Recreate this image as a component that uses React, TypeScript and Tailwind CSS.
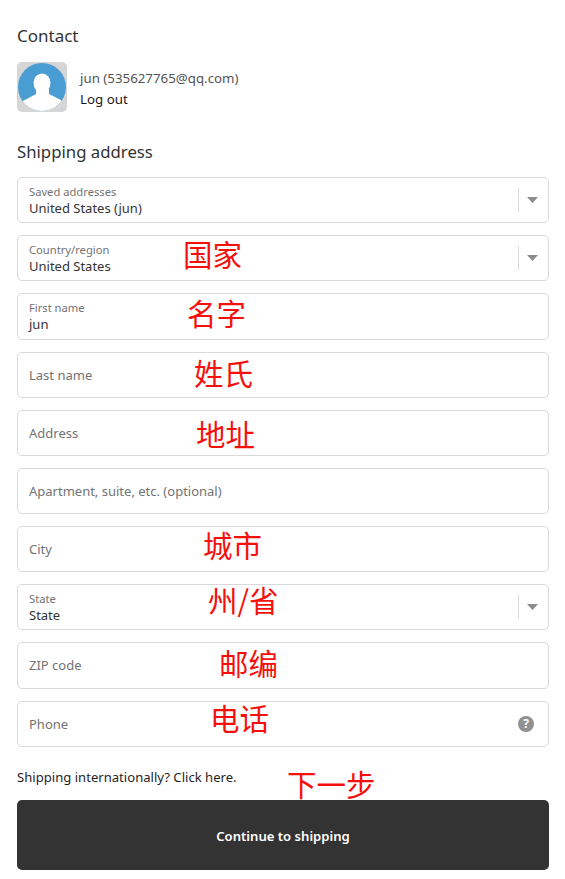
const sans = '"Noto Sans", "Open Sans", sans-serif';
const cjk = '"Noto Sans CJK SC", sans-serif';

function Caret() {
  return (
    <div className="flex items-center h-[24px] border-l border-[#d9d9d9] pl-[8px] pr-[10px]">
      <svg width="11" height="6" viewBox="0 0 11 6" aria-hidden="true">
        <path d="M0 0h11L5.5 6z" fill="#8c8c8c" />
      </svg>
    </div>
  );
}

function Note({ text, className }: { text: string; className: string }) {
  return (
    <span
      className={`absolute text-[29.5px] leading-none text-[#f5100c] whitespace-nowrap ${className}`}
      style={{ fontFamily: cjk }}
    >
      {text}
    </span>
  );
}

interface FieldProps {
  label: string;
  value?: string;
  select?: boolean;
  tall?: boolean;
  help?: boolean;
  note?: string;
  noteClass?: string;
}

function Field({ label, value, select, tall, help, note, noteClass }: FieldProps) {
  return (
    <div
      className={`relative flex items-center justify-between rounded-[5px] border border-[#d9d9d9] bg-white pl-[11px] ${tall ? 'h-[47px]' : 'h-[46px]'}`}
    >
      {value ? (
        <div className="flex flex-col">
          <span className="text-[11.2px] leading-[16px] text-[#737373]">{label}</span>
          <span className="text-[13px] leading-[17px] text-[#333]">{value}</span>
        </div>
      ) : (
        <span className={`text-[13px] text-[#737373] ${tall ? 'pt-[1px]' : 'pt-[2px]'}`}>{label}</span>
      )}
      {select && <Caret />}
      {help && (
        <div className="mr-[14px] flex h-[16px] w-[16px] items-center justify-center rounded-full bg-[#919191] text-[12px] font-bold text-white">
          ?
        </div>
      )}
      {note && <Note text={note} className={noteClass ?? ''} />}
    </div>
  );
}

export default function App() {
  return (
    <div className="relative w-[565px] h-[879px] overflow-hidden bg-white pl-[17px] pr-[16px] pt-[25px]" style={{ fontFamily: sans }}>
      <h2 className="text-[17px] leading-[22px] text-[#333]">Contact</h2>

      {/* Account */}
      <div className="mt-[15px] flex items-center gap-[13px]">
        <div className="h-[50px] w-[50px] rounded-[5px] bg-[#d6d6d6] flex items-center justify-center">
          <svg width="48" height="48" viewBox="0 0 48 48" aria-hidden="true">
            <defs>
              <clipPath id="avatar">
                <circle cx="24" cy="24" r="24" />
              </clipPath>
            </defs>
            <circle cx="24" cy="24" r="24" fill="#4a9dd3" />
            <g clipPath="url(#avatar)" fill="#fff">
              <ellipse cx="24" cy="20" rx="8.5" ry="9.5" />
              <path d="M18 26v5L5 38 2 48h44l-3-11-12-6v-5z" />
            </g>
          </svg>
        </div>
        <div className="flex flex-col gap-[3px] pt-[2px] text-[13.3px] leading-[18px]">
          <span className="text-[#545454]">jun (535627765@qq.com)</span>
          <span className="text-[#1a1a1a]">Log out</span>
        </div>
      </div>

      <h2 className="mt-[28px] text-[16.75px] leading-[24px] text-[#333]">Shipping address</h2>

      {/* Address form */}
      <div className="mt-[13px] flex flex-col gap-[12px]">
        <Field label="Saved addresses" value="United States (jun)" select />
        <Field label="Country/region" value="United States" select note="国家" noteClass="left-[165px] top-[3px]" />
        <Field label="First name" value="jun" tall note="名字" noteClass="left-[169px] top-[4px]" />
        <Field label="Last name" note="姓氏" noteClass="left-[176px] top-[5px]" />
        <Field label="Address" note="地址" noteClass="left-[178px] top-[8px]" />
        <Field label="Apartment, suite, etc. (optional)" />
        <Field label="City" note="城市" noteClass="left-[185px] top-[3px]" />
        <Field label="State" value="State" select note="州/省" noteClass="left-[190px] top-[0px]" />
        <Field label="ZIP code" tall note="邮编" noteClass="left-[201px] top-[5px]" />
        <Field label="Phone" help note="电话" noteClass="left-[192px] top-[1px]" />
      </div>

      <p className="mt-[21px] text-[13.1px] leading-[18px] text-[#1f1f1f]">Shipping internationally? Click here.</p>

      <div className="relative mt-[14px] flex h-[70px] items-center justify-center rounded-[5px] bg-[#333] pt-[3px]">
        <span className="text-[13.1px] font-semibold text-white">Continue to shipping</span>
      </div>
      <Note text="下一步" className="left-[287px] top-[769px]" />
    </div>
  );
}
